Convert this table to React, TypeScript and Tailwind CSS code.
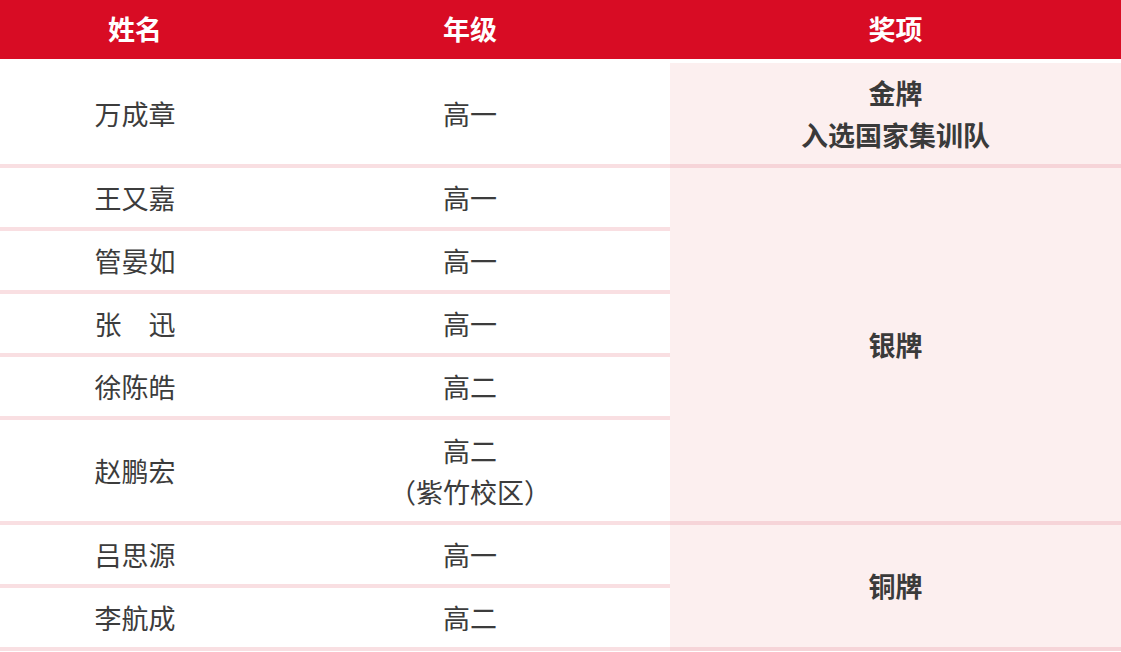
import React from 'react';

type Student = { name: string; grade: string[]; tall?: boolean };

const gold: Student[] = [{ name: '万成章', grade: ['高一'], tall: true }];
const silver: Student[] = [
  { name: '王又嘉', grade: ['高一'] },
  { name: '管晏如', grade: ['高一'] },
  { name: '张　迅', grade: ['高一'] },
  { name: '徐陈皓', grade: ['高二'] },
  { name: '赵鹏宏', grade: ['高二', '（紫竹校区）'], tall: true },
];
const bronze: Student[] = [
  { name: '吕思源', grade: ['高一'] },
  { name: '李航成', grade: ['高二'] },
];

const cell = 'flex flex-col items-center justify-center border-b-4 border-[#f9dfe2] bg-white text-[#3c3c3c] leading-[41px]';

// each group: left two columns per student, award cell spans them all
function Group({ students, award, start }: { students: Student[]; award: string[]; start: number }) {
  const spans: Record<number, string> = {
    1: 'row-span-1',
    2: 'row-span-2',
    5: 'row-span-5',
  };
  return (
    <>
      {students.map((s, i) => (
        <React.Fragment key={s.name}>
          <div
            className={`${cell} col-start-1 ${s.tall ? 'h-[105px]' : 'h-[63px]'}`}
            style={{ gridRowStart: start + i }}
          >
            <span>{s.name}</span>
          </div>
          <div
            className={`${cell} col-start-2 ${s.tall ? 'h-[105px]' : 'h-[63px]'}`}
            style={{ gridRowStart: start + i }}
          >
            {s.grade.map((g) => (
              <span key={g}>{g}</span>
            ))}
          </div>
        </React.Fragment>
      ))}
      <div
        className={`col-start-3 ${spans[students.length]} flex flex-col items-center justify-center border-b-4 border-[#f6d4d8] bg-[#fcefef] font-bold text-[#3a3a3a] leading-[42px]`}
        style={{ gridRowStart: start }}
      >
        {award.map((a) => (
          <span key={a}>{a}</span>
        ))}
      </div>
    </>
  );
}

export default function App() {
  return (
    <div
      className="w-[1121px] h-[652px] bg-white overflow-hidden text-[27px]"
      style={{ fontFamily: '"Noto Sans CJK SC", "Noto Sans", sans-serif' }}
    >
      <div className="grid grid-cols-[270px_400px_451px]">
        {/* header */}
        <div className="h-[59px] bg-[#d80c24] text-white font-bold flex items-center justify-center">姓名</div>
        <div className="h-[59px] bg-[#d80c24] text-white font-bold flex items-center justify-center">年级</div>
        <div className="h-[59px] bg-[#d80c24] text-white font-bold flex items-center justify-center">奖项</div>
        <div className="col-span-3 h-[4px] bg-white" />

        <Group students={gold} award={['金牌', '入选国家集训队']} start={3} />
        <Group students={silver} award={['银牌']} start={4} />
        <Group students={bronze} award={['铜牌']} start={9} />
      </div>
    </div>
  );
}
